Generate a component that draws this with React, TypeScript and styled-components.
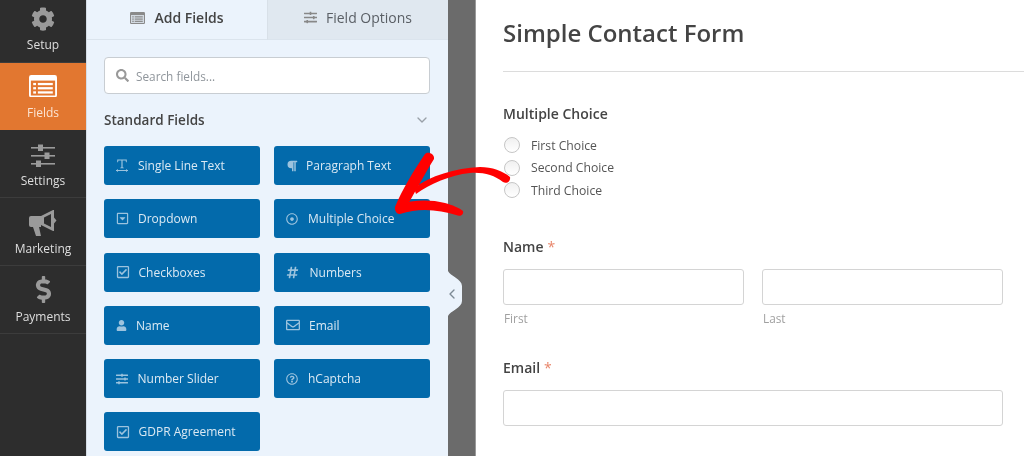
import React from "react";
import styled, { createGlobalStyle } from "styled-components";
import {
  FaCog, FaDollarSign, FaHashtag, FaParagraph, FaRegCaretSquareDown, FaRegCheckSquare,
  FaRegDotCircle, FaRegEnvelope, FaRegQuestionCircle, FaSearch, FaSlidersH, FaUser,
} from "react-icons/fa";
import { FiChevronDown, FiChevronLeft } from "react-icons/fi";

const Global = createGlobalStyle`
  html, body { margin: 0; padding: 0; height: 100%; background: #fff; overflow: hidden; }
  * { box-sizing: border-box; }
  body { font-family: "Open Sans", "Liberation Sans", sans-serif; }
`;

const Page = styled.div`
  position: relative; width: 1024px; height: 456px; display: flex; overflow: hidden; background: #fff;
  filter: blur(0.35px);
`;

const Sidebar = styled.nav`
  width: 86px; flex: none; background: #2d2d2d; display: flex; flex-direction: column;
`;
const NavItem = styled.div<{ $active?: boolean; $h: number; $pad: number }>`
  height: ${(p) => p.$h}px; padding-top: ${(p) => p.$pad}px;
  display: flex; flex-direction: column; align-items: center;
  background: ${(p) => (p.$active ? "#e27730" : "transparent")};
  border-bottom: 1px solid ${(p) => (p.$active ? "#e27730" : "#3c3c3c")};
  color: ${(p) => (p.$active ? "#fbe3d2" : "#dedede")};
`;
const NavIcon = styled.div<{ $active?: boolean; $h: number }>`
  height: ${(p) => p.$h}px; display: flex; align-items: flex-start; justify-content: center;
  color: ${(p) => (p.$active ? "#fff" : "#9a9a9a")};
`;
const NavLabel = styled.span`
  font-size: 12px; line-height: 16px; white-space: nowrap;
`;

const Panel = styled.section`
  width: 362px; flex: none; background: #ebf3fc; border-left: 1px solid #d5dde6; display: flex; flex-direction: column;
`;
const Tabs = styled.div`
  display: flex; height: 40px; flex: none;
`;
const Tab = styled.div<{ $active?: boolean }>`
  flex: 1; display: flex; align-items: center; justify-content: center; gap: 9px; padding-bottom: 4px;
  font-size: 14px; font-weight: ${(p) => (p.$active ? 600 : 400)};
  color: ${(p) => (p.$active ? "#444" : "#5a5f65")};
  background: ${(p) => (p.$active ? "#ebf3fc" : "#e0e8f0")};
  border-bottom: 1px solid #dbe4ed;
  border-left: ${(p) => (p.$active ? "0" : "1px solid #d8e0e8")};
  svg { color: #888; }
`;
const PanelBody = styled.div`
  padding: 17px 18px 0 17px; display: flex; flex-direction: column;
`;
const SearchBox = styled.div`
  height: 37px; background: #fff; border: 1px solid #c8cdd2; border-radius: 4px;
  display: flex; align-items: center; gap: 7px; padding-left: 11px;
  font-size: 11.8px; color: #8f959b;
  svg { color: #999; }
`;
const SectionHead = styled.div`
  display: flex; align-items: center; justify-content: space-between;
  margin-top: 15px; height: 21px;
  font-size: 13.5px; font-weight: 600; color: #444;
  svg { color: #99a0a8; }
`;
const FieldGrid = styled.div`
  margin-top: 16px; display: grid; grid-template-columns: 156px 156px; column-gap: 14px; row-gap: 14.3px;
`;
const FieldButton = styled.div<{ $gap: number }>`
  height: 39px; background: #036aab; border-radius: 3px;
  display: flex; align-items: center; gap: ${(p) => p.$gap}px; padding-left: 12px;
  font-size: 12px; color: #dbe9f3; white-space: nowrap;
  svg { color: #9cc3de; flex: none; }
`;

const Gutter = styled.div`
  width: 28px; flex: none; background: #6b6b6b; border-right: 1px solid #9a9a9a; position: relative;
`;
const Toggle = styled.div`
  position: absolute; left: 0; top: 271px; width: 14px; height: 45px; background: #ebf3fc;
  clip-path: path("M0 0 C2 5 14 8 14 15 L14 30 C14 37 2 40 0 45 Z");
  display: flex; align-items: center; color: #7d8a96;
  svg { margin-left: -4px; }
`;

const Preview = styled.main`
  flex: 1; padding: 0 21px 0 27px; background: #fff;
`;
const Title = styled.h1`
  margin: 16px 0 0; font-size: 24px; line-height: 34px; font-weight: 600; color: #444;
`;
const Rule = styled.hr`
  border: 0; height: 1px; background: #dcdcdc; margin: 21px -21px 0 0;
`;
const FieldLabel = styled.div<{ $top: number }>`
  margin-top: ${(p) => p.$top}px; font-size: 14px; line-height: 20px; font-weight: 600; color: #444;
`;
const Req = styled.span`
  color: #e8856a; font-weight: 400; margin-left: 4px;
`;
const ChoiceList = styled.div`
  margin-top: 13px; display: flex; flex-direction: column; gap: 6.6px;
`;
const Choice = styled.div`
  display: flex; align-items: center; gap: 11px; height: 16px; font-size: 12.2px; color: #555;
`;
const Radio = styled.span`
  width: 16px; height: 16px; margin-left: 1px; border-radius: 50%; border: 1px solid #c6c6c6;
  background: linear-gradient(#f0f0f0, #fff);
`;
const NameRow = styled.div`
  margin-top: 12px; display: grid; grid-template-columns: 241px 241px; column-gap: 18px;
`;
const TextInput = styled.div`
  height: 36px; background: #fff; border: 1px solid #d4d4d4; border-radius: 3px;
`;
const Sub = styled.div`
  margin-top: 5px; padding-left: 1px; font-size: 11.8px; line-height: 16px; color: #a0a0a0;
`;
const WideInput = styled(TextInput)`
  margin-top: 12px; width: 500px;
`;

const ArrowSvg = styled.svg`
  position: absolute; left: 390px; top: 150px; pointer-events: none;
`;

const ListIcon = ({ size, frame, fill }: { size: number; frame: string; fill: string }) => (
  <svg width={size} height={size * 0.8} viewBox="0 0 30 24">
    <rect x="0" y="0" width="30" height="24" rx="2.5" fill={frame} />
    <rect x="2" y="6" width="26" height="16" fill={fill} />
    {[8.5, 13, 17.5].map((y) => (
      <g key={y} fill={frame}>
        <rect x="4.5" y={y} width="3" height="2.4" />
        <rect x="9.5" y={y} width="16" height="2.4" />
      </g>
    ))}
  </svg>
);

const SettingsIcon = () => (
  <svg width="28" height="24" viewBox="0 0 28 24" fill="#9a9a9a">
    <rect x="2" y="3" width="24" height="1.6" />
    <rect x="2" y="11" width="24" height="1.6" />
    <rect x="2" y="19" width="24" height="1.6" />
    <rect x="9" y="0.5" width="5" height="6.5" />
    <rect x="15.5" y="8.5" width="5" height="6.5" />
    <rect x="7" y="16.5" width="5" height="6.5" />
  </svg>
);

const HornIcon = () => (
  <svg width="28" height="27" viewBox="0 0 28 27" fill="currentColor">
    <path d="M2 6H12V17H2Q0 17 0 15V8Q0 6 2 6Z" />
    <path d="M4 17H10L12 26H7Z" />
    <path fillRule="evenodd" d="M12 6L24 0H25V21H24L12 15ZM15 7.5V13.5L22 17V4Z" />
    <path d="M25 7.5L27.5 10.5L25 13.5Z" />
  </svg>
);

const TextIcon = () => (
  <svg width="12" height="13" viewBox="0 0 12 13" fill="currentColor">
    <path d="M1.2 .5h9.6v2.8h-.8L9.6 1.5H6.6v6.8l1.2.4v.6H4.2v-.6l1.2-.4V1.5H2.4L2 3.3h-.8z" />
    <rect x="0" y="11" width="12" height="1" />
    <path d="M0 11.5 2 10v3zM12 11.5 10 10v3z" />
  </svg>
);

const nav = [
  { label: "Setup", h: 63, pad: 7, iconH: 30, icon: <FaCog size={24} /> },
  { label: "Fields", h: 67, pad: 12, iconH: 30, active: true, icon: <ListIcon size={28} frame="#fff" fill="#e27730" /> },
  { label: "Settings", h: 68, pad: 14, iconH: 29, icon: <SettingsIcon /> },
  { label: "Marketing", h: 68, pad: 12, iconH: 31, icon: <HornIcon /> },
  { label: "Payments", h: 68, pad: 10, iconH: 33, icon: <FaDollarSign size={27} /> },
];

const fields = [
  { label: "Single Line Text", gap: 10, icon: <TextIcon /> },
  { label: "Paragraph Text", gap: 8, icon: <FaParagraph size={12} /> },
  { label: "Dropdown", gap: 9, icon: <FaRegCaretSquareDown size={13} /> },
  { label: "Multiple Choice", gap: 10, icon: <FaRegDotCircle size={12} /> },
  { label: "Checkboxes", gap: 8.5, icon: <FaRegCheckSquare size={14} /> },
  { label: "Numbers", gap: 10.5, icon: <FaHashtag size={13} /> },
  { label: "Name", gap: 9, icon: <FaUser size={11} /> },
  { label: "Email", gap: 9, icon: <FaRegEnvelope size={14} /> },
  { label: "Number Slider", gap: 9.5, icon: <FaSlidersH size={12} /> },
  { label: "hCaptcha", gap: 10, icon: <FaRegQuestionCircle size={12} /> },
  { label: "GDPR Agreement", gap: 8.5, icon: <FaRegCheckSquare size={14} /> },
];

export default function App() {
  return (
    <Page>
      <Global />
      <Sidebar>
        {nav.map((n) => (
          <NavItem key={n.label} $active={n.active} $h={n.h} $pad={n.pad}>
            <NavIcon $active={n.active} $h={n.iconH}>{n.icon}</NavIcon>
            <NavLabel>{n.label}</NavLabel>
          </NavItem>
        ))}
      </Sidebar>
      <Panel>
        <Tabs>
          <Tab $active><ListIcon size={15} frame="#8a8a8a" fill="#d3dae2" />Add Fields</Tab>
          <Tab><FaSlidersH size={13} />Field Options</Tab>
        </Tabs>
        <PanelBody>
          <SearchBox><FaSearch size={13} />Search fields...</SearchBox>
          <SectionHead>Standard Fields<FiChevronDown size={16} /></SectionHead>
          <FieldGrid>
            {fields.map((f) => (
              <FieldButton key={f.label} $gap={f.gap}>{f.icon}{f.label}</FieldButton>
            ))}
          </FieldGrid>
        </PanelBody>
      </Panel>
      <Gutter>
        <Toggle><FiChevronLeft size={16} /></Toggle>
      </Gutter>
      <Preview>
        <Title>Simple Contact Form</Title>
        <Rule />
        <FieldLabel $top={32}>Multiple Choice</FieldLabel>
        <ChoiceList>
          <Choice><Radio />First Choice</Choice>
          <Choice><Radio />Second Choice</Choice>
          <Choice><Radio />Third Choice</Choice>
        </ChoiceList>
        <FieldLabel $top={39}>Name<Req>*</Req></FieldLabel>
        <NameRow>
          <div><TextInput /><Sub>First</Sub></div>
          <div><TextInput /><Sub>Last</Sub></div>
        </NameRow>
        <FieldLabel $top={32}>Email<Req>*</Req></FieldLabel>
        <WideInput />
      </Preview>
      <ArrowSvg width="130" height="70" viewBox="390 150 130 70">
        <g fill="#f00">
          <path d="M425 154 C428 151 435 154 434 159 C426 172 416 190 406 208 C402 214 394 213 395 207 C402 190 414 170 425 154 Z" />
          <path d="M398 204 C412 200 430 199 445 203 C452 205 460 208 463 211 C464 215 460 217 456 215 C440 210 420 207 400 214 C394 214 394 206 398 204 Z" />
          <path d="M414 188 C430 176 455 168 480 167 C492 167 503 171 510 177 C511 182 506 184 503 182 C494 175 483 172 470 173 C450 175 430 184 416 194 Z" />
        </g>
      </ArrowSvg>
    </Page>
  );
}
